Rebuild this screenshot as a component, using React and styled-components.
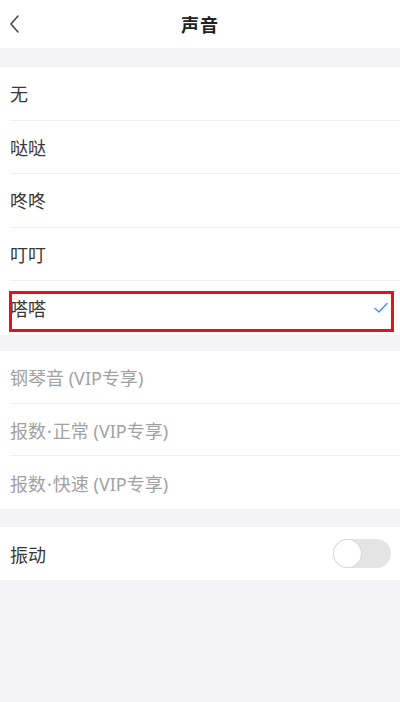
import React from "react";
import styled, { createGlobalStyle } from "styled-components";

const GlobalStyle = createGlobalStyle`
    html, body {
        margin: 0;
        padding: 0;
        background: #f3f3f7;
    }
    body {
        font-family: "Noto Sans CJK SC", "Noto Sans", sans-serif;
    }
`;

const sounds = [
    { label: "无" },
    { label: "哒哒" },
    { label: "咚咚" },
    { label: "叮叮" },
    { label: "嗒嗒", selected: true },
];

const vipSounds = [
    { head: "钢琴音", tail: "" },
    { head: "报数", tail: "正常" },
    { head: "报数", tail: "快速" },
];

const BackIcon = () => (
    <svg width="12" height="20" viewBox="0 0 12 20" fill="none">
        <path d="M10 2 L3 10 L10 18" stroke="#444" strokeWidth="1.5" strokeLinecap="round" strokeLinejoin="round" />
    </svg>
);

const CheckIcon = () => (
    <svg width="14" height="12" viewBox="0 0 14 12" fill="none">
        <path d="M1 6.5 L5 10 L13 1.5" stroke="#4f8ff0" strokeWidth="1.5" strokeLinecap="round" strokeLinejoin="round" />
    </svg>
);

export default function App() {
    return (
        <Page>
            <GlobalStyle />
            <Header>
                <BackButton>
                    <BackIcon />
                </BackButton>
                <Title>声音</Title>
            </Header>
            <Gap $h={19} />
            <Section>
                {sounds.map((s) => (
                    <Row key={s.label} $h={53.6}>
                        <Label>{s.label}</Label>
                        {s.selected && <CheckIcon />}
                        {s.selected && <Highlight />}
                    </Row>
                ))}
            </Section>
            <Gap $h={16} />
            <Section>
                {vipSounds.map((v, i) => (
                    <Row key={i} $h={52.7}>
                        <Label $muted>
                            {v.head}
                            {v.tail && <Dot>·</Dot>}
                            {v.tail}
                            <Latin> (VIP</Latin>专享<Latin>)</Latin>
                        </Label>
                    </Row>
                ))}
            </Section>
            <Gap $h={18} />
            <Section>
                <Row $h={53}>
                    <Label>振动</Label>
                    <Toggle>
                        <Knob />
                    </Toggle>
                </Row>
            </Section>
        </Page>
    );
}

const Page = styled.div`
    width: 400px;
    min-height: 702px;
    background: #f3f3f7;
    display: flex;
    flex-direction: column;
`;

const Header = styled.div`
    height: 48px;
    background: #fff;
    display: flex;
    align-items: center;
    justify-content: center;
    position: relative;
`;

const BackButton = styled.div`
    position: absolute;
    left: 8px;
    top: 14px;
    display: flex;
`;

const Title = styled.div`
    font-size: 18px;
    font-weight: 700;
    color: #222;
    letter-spacing: 1px;
`;

const Gap = styled.div`
    height: ${({ $h }) => $h}px;
`;

const Section = styled.div`
    background: #fff;
    display: flex;
    flex-direction: column;
`;

const Row = styled.div`
    height: ${({ $h }) => $h}px;
    box-sizing: border-box;
    margin-left: 10px;
    padding-right: 12px;
    display: flex;
    align-items: center;
    justify-content: space-between;
    border-bottom: 1px solid #efeff2;
    position: relative;

    &:last-child {
        border-bottom: none;
    }
`;

const Label = styled.span`
    font-size: 18px;
    color: ${({ $muted }) => ($muted ? "#a2a2a2" : "#383838")};
`;

const Dot = styled.span`
    font-family: "Noto Sans", sans-serif;
    margin: 0 1px;
`;

const Latin = styled.span`
    font-family: "Noto Sans", sans-serif;
`;

const Highlight = styled.div`
    position: absolute;
    left: -1px;
    right: 6px;
    top: 10px;
    bottom: 3px;
    border: 3px solid #e0141e;
    pointer-events: none;
`;

const Toggle = styled.div`
    width: 58px;
    height: 29px;
    border-radius: 15px;
    background: #e4e4e4;
    display: flex;
    align-items: center;
    margin-right: -3px;
`;

const Knob = styled.div`
    width: 27px;
    height: 27px;
    margin-left: 1px;
    border-radius: 50%;
    background: #fff;
    box-shadow: 0 0 0 1px #dadada;
`;
